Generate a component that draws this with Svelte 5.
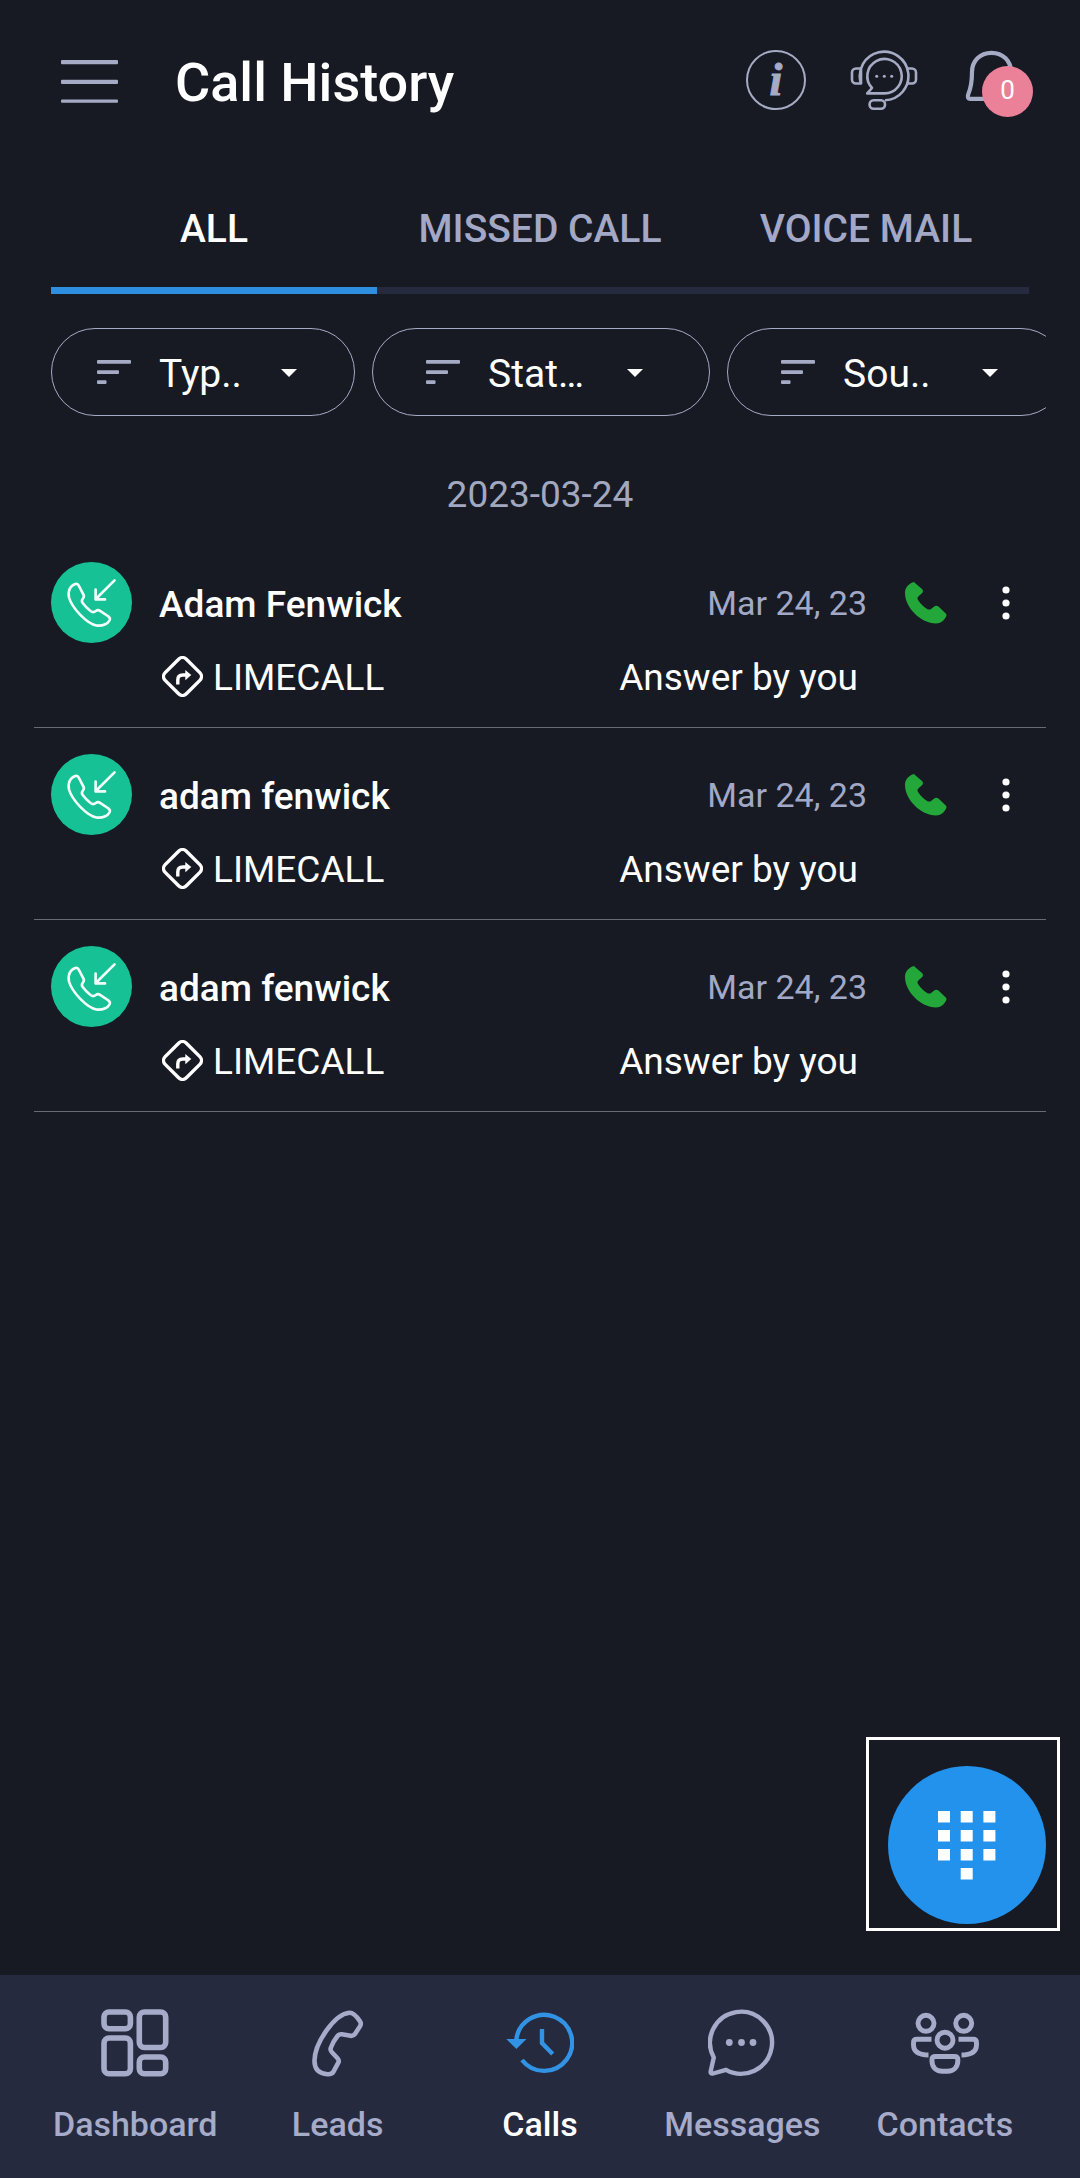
<script lang="ts">
  type Call = { name: string; line: string; date: string; status: string };

  const tabs = ["ALL", "MISSED CALL", "VOICE MAIL"];
  let activeTab = $state(0);

  const filters = [
    { label: "Typ..", narrow: true },
    { label: "Stat…", narrow: false },
    { label: "Sou..", narrow: false },
  ];

  const calls: Call[] = [
    { name: "Adam Fenwick", line: "LIMECALL", date: "Mar 24, 23", status: "Answer by you" },
    { name: "adam fenwick", line: "LIMECALL", date: "Mar 24, 23", status: "Answer by you" },
    { name: "adam fenwick", line: "LIMECALL", date: "Mar 24, 23", status: "Answer by you" },
  ];

  const nav = ["Dashboard", "Leads", "Calls", "Messages", "Contacts"];
  let activeNav = $state("Calls");
</script>

<div class="app">
  <header>
    <button class="menu" aria-label="Menu">
      <svg width="57" height="43" viewBox="0 0 57 43" fill="currentColor">
        <rect y="0" width="57" height="4.2" rx="1" />
        <rect y="19.7" width="57" height="4.2" rx="1" />
        <rect y="39.4" width="57" height="3.3" rx="1" />
      </svg>
    </button>
    <h1>Call History</h1>
    <div class="actions">
      <button class="info" aria-label="Info"><span>i</span></button>
      <button class="support" aria-label="Support">
        <svg width="70" height="62" viewBox="0 0 70 62" fill="none" stroke="currentColor" stroke-width="2.6" stroke-linejoin="round">
          <path d="M11 34.5A24.3 24.3 0 1 1 35 51.3" />
          <path d="M11.5 19.5H6a4 4 0 0 0-4 4v7a4 4 0 0 0 4 4h5V20M57.5 19.5H62a4 4 0 0 1 4 4v7a4 4 0 0 1-4 4h-5" />
          <path d="M34.5 44.4H17.2l4.8-5.4A17.2 17.2 0 1 1 34.5 44.4Z" />
          <rect x="19.6" y="51.2" width="15.4" height="8.6" rx="4" />
          <g fill="currentColor" stroke="none">
            <circle cx="26.7" cy="27.3" r="1.5" />
            <circle cx="34.3" cy="27.3" r="1.5" />
            <circle cx="41.7" cy="27.3" r="1.5" />
          </g>
        </svg>
      </button>
      <button class="bell" aria-label="Notifications">
        <svg width="62" height="62" viewBox="0 0 62 62" fill="none" stroke="currentColor" stroke-width="4.2" stroke-linejoin="round">
          <path d="M31.5 6.8C20 6.8 12 15 12 26c0 9-.3 14-3.8 22.500-1 2.800-.2 4.300 2.300 4.300h42c2.500 0 3.300-1.500 2.300-4.300C51.300 40 51 35 51 26 51 15 43 6.800 31.500 6.800Z" />
        </svg>
        <span class="badge">0</span>
      </button>
    </div>
  </header>

  <div class="tabs">
    {#each tabs as tab, i}
      <button class:active={activeTab === i} onclick={() => (activeTab = i)}>{tab}</button>
    {/each}
  </div>

  <div class="filters">
    {#each filters as filter}
      <button class:narrow={filter.narrow}>
        <svg width="34" height="24" viewBox="0 0 34 24" fill="#a5abc4">
          <rect width="34" height="3.7" rx="1" />
          <rect y="10.2" width="22" height="3.7" rx="1" />
          <rect y="20.3" width="9.5" height="3.7" rx="1" />
        </svg>
        <span>{filter.label}</span>
        <i class="caret"></i>
      </button>
    {/each}
  </div>

  <p class="day">2023-03-24</p>

  <ul>
    {#each calls as call}
      <li>
        <div class="avatar">
          <svg width="81" height="81" viewBox="0 0 81 81" fill="none" stroke="#f4fffb" stroke-width="2.6" stroke-linecap="round" stroke-linejoin="round">
            <path d="M24.5 22c-5 1.500-8 6.500-6.500 13.500C21 46 36 62 45.500 63.500c6 .8 11.500-1.500 13.300-5.500.8-2-.8-3-2-4L49 48.800c-1.500-1-2.800-.8-4.200.2-2 1.500-3.300 1.500-5 .2-3-2.200-6-5.200-8.300-8.400-1.200-1.600-1-2.500.5-4.300 1-1.300 1.300-2.700.3-4.200L27.500 23.200c-.8-1.200-1.700-1.600-3-1.200Z" />
            <path d="M63.500 18.300 44.800 37M44.600 27.500V37.400H54" />
          </svg>
        </div>
        <div class="details">
          <div class="row top">
            <span class="name">{call.name}</span>
            <span class="date">{call.date}</span>
          </div>
          <div class="row">
            <span class="line">
              <svg width="41" height="41" viewBox="0 0 41 41" fill="none" stroke="#fff" stroke-width="3.4">
                <rect x="5.5" y="5.5" width="30" height="30" rx="5.5" transform="rotate(45 20.5 20.5)" />
                <path d="M15.800 28.500v-4.500c0-3.500 1.500-5 5-5h3.500" />
                <path d="M23.300 14v10.200l6-5.100Z" fill="#fff" stroke="none" />
              </svg>
              {call.line}
            </span>
            <span class="status">{call.status}</span>
          </div>
        </div>
        <button class="dial" aria-label="Call back">
          <svg width="42" height="42" viewBox="0 0 42 42" fill="#23a63a">
            <path d="M7.300.600c-4 1.900-7.300 5-7.300 10.500C0 25.500 15.500 41.500 31 41.500c5 0 8-3.200 10.100-7 .7-1.300.5-2.200-.6-3.200l-6.800-6.500c-1.500-1.400-3-1.500-4.500-.3l-2.800 2.200c-1.500 1.200-3 1.200-4.700 0-3.300-2.300-6.200-5-8.500-8.500-1-1.500-.9-2.800.3-4l3.500-3c1.200-1.200 1.300-2.400.3-4L10.600 1.500C9.700.200 8.600 0 7.300.600Z" />
          </svg>
        </button>
        <button class="more" aria-label="More">
          <svg width="8" height="34" viewBox="0 0 8 34" fill="#fff">
            <circle cx="4" cy="4" r="3.6" />
            <circle cx="4" cy="17" r="3.6" />
            <circle cx="4" cy="30" r="3.6" />
          </svg>
        </button>
      </li>
    {/each}
  </ul>

  <div class="fab">
    <button aria-label="Dial pad">
      <svg width="58" height="69" viewBox="0 0 58 69" fill="#fff">
        {#each [0, 1, 2] as row}
          {#each [0, 1, 2] as col}
            <rect x={col * 22.7} y={row * 19} width="12" height="11.5" />
          {/each}
        {/each}
        <rect x="22.7" y="57" width="12" height="11.5" />
      </svg>
    </button>
  </div>

  <nav>
    {#each nav as item}
      <button class:active={activeNav === item} onclick={() => (activeNav = item)}>
        {#if item === "Dashboard"}
          <svg width="68" height="68" viewBox="0 0 68 68" fill="none" stroke="currentColor" stroke-width="5.6">
            <rect x="3" y="3" width="26.4" height="16.7" rx="5" />
            <rect x="3" y="29" width="26.4" height="35.8" rx="5" />
            <rect x="38.3" y="3" width="26.4" height="35.5" rx="5" />
            <rect x="38.3" y="48" width="26.4" height="16.8" rx="5" />
          </svg>
        {:else if item === "Leads"}
          <svg width="52" height="68" viewBox="0 0 52 68" fill="none" stroke="currentColor" stroke-width="4.6" stroke-linejoin="round">
            <path d="M37.500 3.800C23 5 3 33 2.500 51.500 2.300 61 8 64.700 15.500 65.200c3 .2 4.800-.3 6-2.500l4.800-9c.8-1.600.6-2.900-.6-4.200l-6-6.500c-1.300-1.400-1.500-2.600-.8-4.400 1.500-4.200 3.600-7.900 6.600-11.600 1.200-1.500 2.500-2 4.400-1.700l8.600 1.500c2 .3 3.300-.2 4.500-1.900l5-7.600c1.200-2 1.100-3.600-.3-5.500C45 8 41.500 3.500 37.500 3.800Z" />
          </svg>
        {:else if item === "Calls"}
          <svg class="history" width="68" height="68" viewBox="0 0 68 68" fill="none" stroke="#3292e3" stroke-width="4.4">
            <path d="M10.300 31A28 28 0 1 1 16 51" />
            <path d="M36 20v14l10.700 11" />
            <path d="M.300 30h20.200L10.400 40Z" fill="#3292e3" stroke="none" />
          </svg>
        {:else if item === "Messages"}
          <svg width="68" height="68" viewBox="0 0 68 68" fill="none" stroke="currentColor" stroke-width="4.4" stroke-linejoin="round">
            <path d="M5.800 48.500A31 31 0 1 1 18 60.800L5 64.500c-1.800.4-2.700-.5-2.300-2.300Z" />
            <g fill="currentColor" stroke="none">
              <circle cx="21.3" cy="33.5" r="3.4" />
              <circle cx="33.5" cy="33.5" r="3.4" />
              <circle cx="45" cy="33.5" r="3.4" />
            </g>
          </svg>
        {:else}
          <svg width="68" height="68" viewBox="0 -4 68 68" fill="none" stroke="currentColor" stroke-width="4.9">
            <circle cx="15" cy="10.3" r="8" />
            <circle cx="52.7" cy="10.3" r="8" />
            <circle cx="34" cy="27.2" r="8" />
            <path d="M20.500 26.300H6c-2.500 0-3.500 1-3.500 3.500v2c0 6.500 5 10.200 15 10.200" />
            <path d="M47.500 26.300H62c2.500 0 3.500 1 3.500 3.500v2c0 6.500-5 10.200-15 10.200" />
            <path d="M24.500 43.500h18.800c2.600 0 3.600 1 3.600 3.500 0 7.200-4 11.200-10.500 11.200h-5C24.700 58.200 20.900 54.200 20.900 47c0-2.500 1-3.500 3.600-3.500Z" />
          </svg>
        {/if}
        <span>{item}</span>
      </button>
    {/each}
  </nav>
</div>

<style>
  :global(body) {
    margin: 0;
    background: #171a23;
  }

  .app {
    position: relative;
    display: flex;
    flex-direction: column;
    width: 1080px;
    height: 2178px;
    overflow: hidden;
    background: #171a23;
    color: #fff;
    font-family: Roboto, "Liberation Sans", sans-serif;
  }

  button {
    padding: 0;
    border: none;
    background: none;
    color: inherit;
    font: inherit;
    cursor: pointer;
  }

  svg {
    display: block;
    flex: none;
  }

  header {
    display: flex;
    align-items: center;
    height: 162px;
    padding: 0 46px 0 61px;
    color: #a5abc4;
  }

  h1 {
    margin: 3px 0 0 57px;
    color: #fff;
    font-size: 54px;
    font-weight: 500;
    line-height: 62px;
  }

  .actions {
    display: flex;
    align-items: center;
    margin: 0 0 2px auto;
  }

  .info {
    box-sizing: border-box;
    width: 60px;
    height: 60px;
    border: 2.5px solid;
    border-radius: 50%;
  }

  .info span {
    display: block;
    font: italic bold 46px/52px "Liberation Serif", serif;
    -webkit-text-stroke: 1px;
  }

  .support {
    margin-left: 44px;
  }

  .bell {
    position: relative;
    margin: 0 12px 6px 40px;
  }

  .badge {
    position: absolute;
    top: 20px;
    left: 22px;
    width: 51px;
    height: 51px;
    border-radius: 50%;
    background: #ea8198;
    color: #fff;
    font-size: 26px;
    line-height: 49px;
    text-align: center;
  }

  .tabs {
    display: flex;
    height: 132px;
    margin: 0 51px;
  }

  .tabs button {
    flex: 1;
    padding-top: 8px;
    border-bottom: 7px solid #262a3e;
    color: #a2a8c6;
    font-size: 39px;
    font-weight: 500;
  }

  .tabs .active {
    border-color: #2e8fe0;
    color: #fff;
  }

  .filters {
    display: flex;
    gap: 17px;
    margin: 34px 34px 0 51px;
    overflow: hidden;
  }

  .filters button {
    display: flex;
    flex: none;
    align-items: center;
    box-sizing: border-box;
    width: 338px;
    height: 88px;
    padding: 0 66px 0 53px;
    border: 1px solid #a5abc4;
    border-radius: 44px;
    font-size: 39px;
  }

  .filters .narrow {
    width: 304px;
    padding: 0 57px 0 45px;
  }

  .filters span {
    margin: 4px 0 0 28px;
  }

  .caret {
    margin: 2px 0 0 auto;
    border: solid transparent;
    border-width: 8px 8px 0;
    border-top-color: #fff;
  }

  .day {
    margin: 57px 0 0;
    color: #a2a8c0;
    font-size: 37px;
    line-height: 44px;
    text-align: center;
  }

  ul {
    margin: 19px 34px 0;
    padding: 0;
    list-style: none;
  }

  li {
    display: flex;
    align-items: flex-start;
    box-sizing: border-box;
    height: 192px;
    padding: 26px 36px 0 17px;
    border-bottom: 1px solid #676a74;
  }

  .avatar {
    border-radius: 50%;
    background: #16c295;
  }

  .details {
    width: 708px;
    margin: 21px 0 0 27px;
  }

  .row {
    display: flex;
    justify-content: space-between;
    font-size: 37px;
    line-height: 44px;
  }

  .top {
    margin-bottom: 29px;
  }

  .name {
    font-weight: 500;
  }

  .date {
    color: #a2a8c6;
    font-size: 34px;
    line-height: 41px;
  }

  .line {
    display: flex;
    align-items: center;
    gap: 10px;
    margin-left: 3px;
  }

  .line svg {
    margin-bottom: 3px;
  }

  .status {
    margin-right: 9px;
  }

  .dial {
    margin: 20px 0 0 38px;
  }

  .more {
    margin: 24px 0 0 auto;
  }

  .fab {
    position: absolute;
    top: 1737px;
    left: 866px;
    box-sizing: border-box;
    width: 194px;
    height: 194px;
    padding: 26px 0 0 19px;
    border: 3px solid #fff;
  }

  .fab button {
    display: flex;
    justify-content: center;
    box-sizing: border-box;
    width: 158px;
    height: 158px;
    padding-top: 45px;
    border-radius: 50%;
    background: #2292ed;
  }

  nav {
    display: flex;
    box-sizing: border-box;
    height: 203px;
    margin-top: auto;
    padding: 34px 34px 0;
    background: #262a3f;
    color: #a5abc8;
  }

  nav button {
    display: flex;
    flex: 1;
    flex-direction: column;
    align-items: center;
    gap: 27px;
    font-size: 34px;
    font-weight: 500;
    line-height: 40px;
  }

  nav .active {
    color: #fff;
  }
</style>
